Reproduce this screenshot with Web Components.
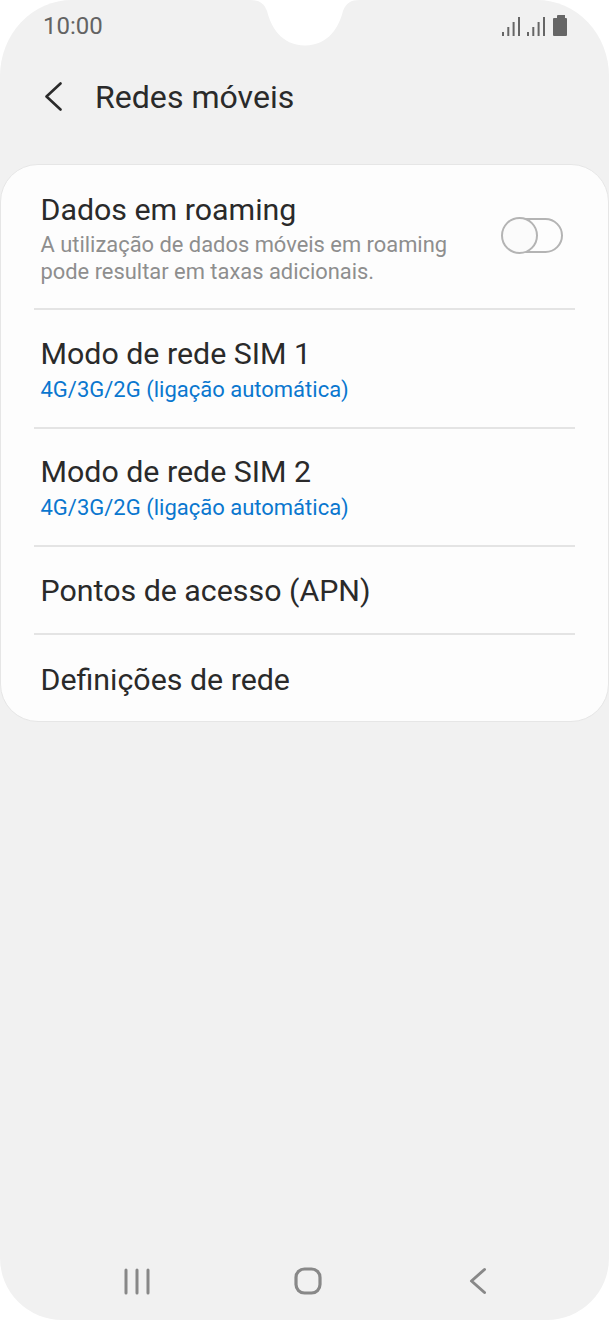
<!DOCTYPE html>
<html lang="pt">
<head>
<meta charset="utf-8">
<title>Redes móveis</title>
<style>
html, body { margin: 0; padding: 0; background: #fff; }
body { font-family: Roboto, "Liberation Sans", sans-serif; }
</style>
</head>
<body>
<phone-screen>
  <status-bar slot="top" time="10:00"></status-bar>
  <app-bar slot="top" title="Redes móveis"></app-bar>
  <settings-card>
    <setting-row height="145" sub="A utilização de dados móveis em roaming pode resultar em taxas adicionais." label="Dados em roaming" toggle></setting-row>
    <setting-row height="119" accent sub="4G/3G/2G (ligação automática)" label="Modo de rede SIM 1"></setting-row>
    <setting-row height="118" accent sub="4G/3G/2G (ligação automática)" label="Modo de rede SIM 2"></setting-row>
    <setting-row height="88" label="Pontos de acesso (APN)"></setting-row>
    <setting-row height="86" last label="Definições de rede"></setting-row>
  </settings-card>
  <nav-bar slot="bottom"></nav-bar>
</phone-screen>

<script>
class PhoneScreen extends HTMLElement {
    constructor() {
        super();
        this.shadowDOM = this.attachShadow({ mode: "open" });
        this.shadowDOM.innerHTML = `
        <style>
        :host {
            display: flex;
            flex-direction: column;
            position: relative;
            width: 609px;
            height: 1320px;
            overflow: hidden;
            background: #f1f1f1;
            border-radius: 72px 72px 62px 62px / 76px 76px 62px 62px;
        }
        .main { flex: 1; padding-top: 23px; }
        .notch { position: absolute; left: 250px; top: 0; }
        </style>
        <slot name="top"></slot>
        <div class="main"><slot></slot></div>
        <slot name="bottom"></slot>
        <svg class="notch" width="110" height="46" viewBox="0 0 110 46">
            <path fill="#fff" d="M0 0 C9 0 14 3 17 11 C21 27 31 45 55 45.500 C79 45 89 27 93 11 C96 3 101 0 110 0 Z"/>
        </svg>`;
    }
}

class StatusBar extends HTMLElement {
    constructor() {
        super();
        this.shadowDOM = this.attachShadow({ mode: "open" });
    }
    connectedCallback() {
        const bars = `<path d="M1 29V25M6.300 29V20M11.600 29V15M17 29V10" />`;
        this.shadowDOM.innerHTML = `
        <style>
        :host {
            display: flex;
            justify-content: space-between;
            align-items: flex-start;
            height: 53px;
            padding: 0 42px 0 43px;
            box-sizing: border-box;
            color: #636363;
        }
        .time { font-size: 24px; line-height: 28px; margin-top: 12px; }
        svg { margin-top: 14px; display: block; }
        </style>
        <span class="time">${this.getAttribute("time")}</span>
        <svg width="65" height="23" viewBox="0 0 65 23" fill="none">
            <g stroke="#666" stroke-width="2" transform="translate(0 -7)">${bars}</g>
            <g stroke="#666" stroke-width="2" transform="translate(25 -7)">${bars}</g>
            <path fill="#666" d="M51 5Q51 4 52 4H55V2Q55 1 56 1H63V4H64Q65 4 65 5V21Q65 22 64 22H52Q51 22 51 21Z"/>
        </svg>`;
    }
}

class AppBar extends HTMLElement {
    constructor() {
        super();
        this.shadowDOM = this.attachShadow({ mode: "open" });
    }
    connectedCallback() {
        this.shadowDOM.innerHTML = `
        <style>
        :host {
            display: flex;
            align-items: center;
            height: 88px;
            padding-left: 43px;
            box-sizing: border-box;
            color: #2a2a2a;
        }
        svg { display: block; width: 20px; height: 30px; margin-right: 32px; }
        h1 { margin: 0; font-size: 32.100px; font-weight: 400; line-height: 88px; }
        </style>
        <svg viewBox="0 0 20 30" fill="none">
            <path d="M17.500 1.500 L3.500 14.500 L17.500 27.500" stroke="#2b2b2b" stroke-width="2.600" stroke-linecap="round" stroke-linejoin="round"/>
        </svg>
        <h1>${this.getAttribute("title")}</h1>`;
    }
}

class SettingsCard extends HTMLElement {
    constructor() {
        super();
        this.shadowDOM = this.attachShadow({ mode: "open" });
        this.shadowDOM.innerHTML = `
        <style>
        :host {
            display: block;
            background: #fdfdfd;
            border: 1px solid #e6e6e6;
            border-radius: 38px;
            overflow: hidden;
        }
        </style>
        <slot></slot>`;
    }
}

class SettingRow extends HTMLElement {
    constructor() {
        super();
        this.shadowDOM = this.attachShadow({ mode: "open" });
    }
    connectedCallback() {
        const sub = this.getAttribute("sub");
        const toggle = this.hasAttribute("toggle");
        this.shadowDOM.innerHTML = `
        <style>
        :host {
            display: flex;
            align-items: center;
            justify-content: space-between;
            height: ${this.getAttribute("height")}px;
            margin: 0 33px;
            padding: 1px 6px 0 6.500px;
            box-sizing: border-box;
            border-bottom: ${this.hasAttribute("last") ? "0" : "2px solid #e4e4e4"};
        }
        :host([toggle]) { padding-top: 5px; }
        :host([accent]) { padding-top: 2px; }
        :host([last]) { padding-top: 4px; }
        .label { font-size: 30.350px; line-height: 34px; color: #2a2a2a; }
        .sub { font-size: 21.900px; line-height: 27px; margin-top: 4px; color: #8e8e8e; width: 440px; }
        :host([accent]) .sub { font-size: 22px; color: #0a77cf; width: auto; margin-top: 5px; }
        .toggle { position: relative; width: 62px; height: 35px; margin: 0 6px 7px 0; }
        .track {
            position: absolute; left: 8px; right: 0; top: 0; bottom: 0;
            border: 2px solid #b4b4b4; border-radius: 18px; box-sizing: border-box;
        }
        .thumb {
            position: absolute; left: 0; top: -1px; width: 37px; height: 37px;
            border: 2px solid #b4b4b4; border-radius: 50%; box-sizing: border-box;
            background: #fbfbfb;
        }
        </style>
        <div>
            <div class="label">${this.getAttribute("label")}</div>
            ${sub ? `<div class="sub">${sub}</div>` : ""}
        </div>
        ${toggle ? `<div class="toggle"><div class="track"></div><div class="thumb"></div></div>` : ""}`;
    }
}

class NavBar extends HTMLElement {
    constructor() {
        super();
        this.shadowDOM = this.attachShadow({ mode: "open" });
        this.shadowDOM.innerHTML = `
        <style>
        :host {
            display: flex;
            align-items: flex-start;
            justify-content: space-between;
            height: 54px;
            padding: 1px 122px 0 124px;
            box-sizing: border-box;
        }
        svg { display: block; }
        .home { margin-right: 4px; }
        </style>
        <svg width="26" height="28" viewBox="0 0 26 28" fill="none" stroke="#888" stroke-width="3" stroke-linecap="round">
            <path d="M2 3V26M13 3V26M24 3V26"/>
        </svg>
        <svg class="home" width="28" height="28" viewBox="0 0 28 28" fill="none" stroke="#888" stroke-width="3.200">
            <rect x="2" y="2" width="24" height="24" rx="8.500"/>
        </svg>
        <svg width="18" height="28" viewBox="0 0 18 28" fill="none" stroke="#888" stroke-width="3" stroke-linecap="round" stroke-linejoin="round">
            <path d="M15.500 2.500 L2.500 14 L15.500 25.500"/>
        </svg>`;
    }
}

customElements.define("phone-screen", PhoneScreen);
customElements.define("status-bar", StatusBar);
customElements.define("app-bar", AppBar);
customElements.define("settings-card", SettingsCard);
customElements.define("setting-row", SettingRow);
customElements.define("nav-bar", NavBar);
</script>
</body>
</html>
